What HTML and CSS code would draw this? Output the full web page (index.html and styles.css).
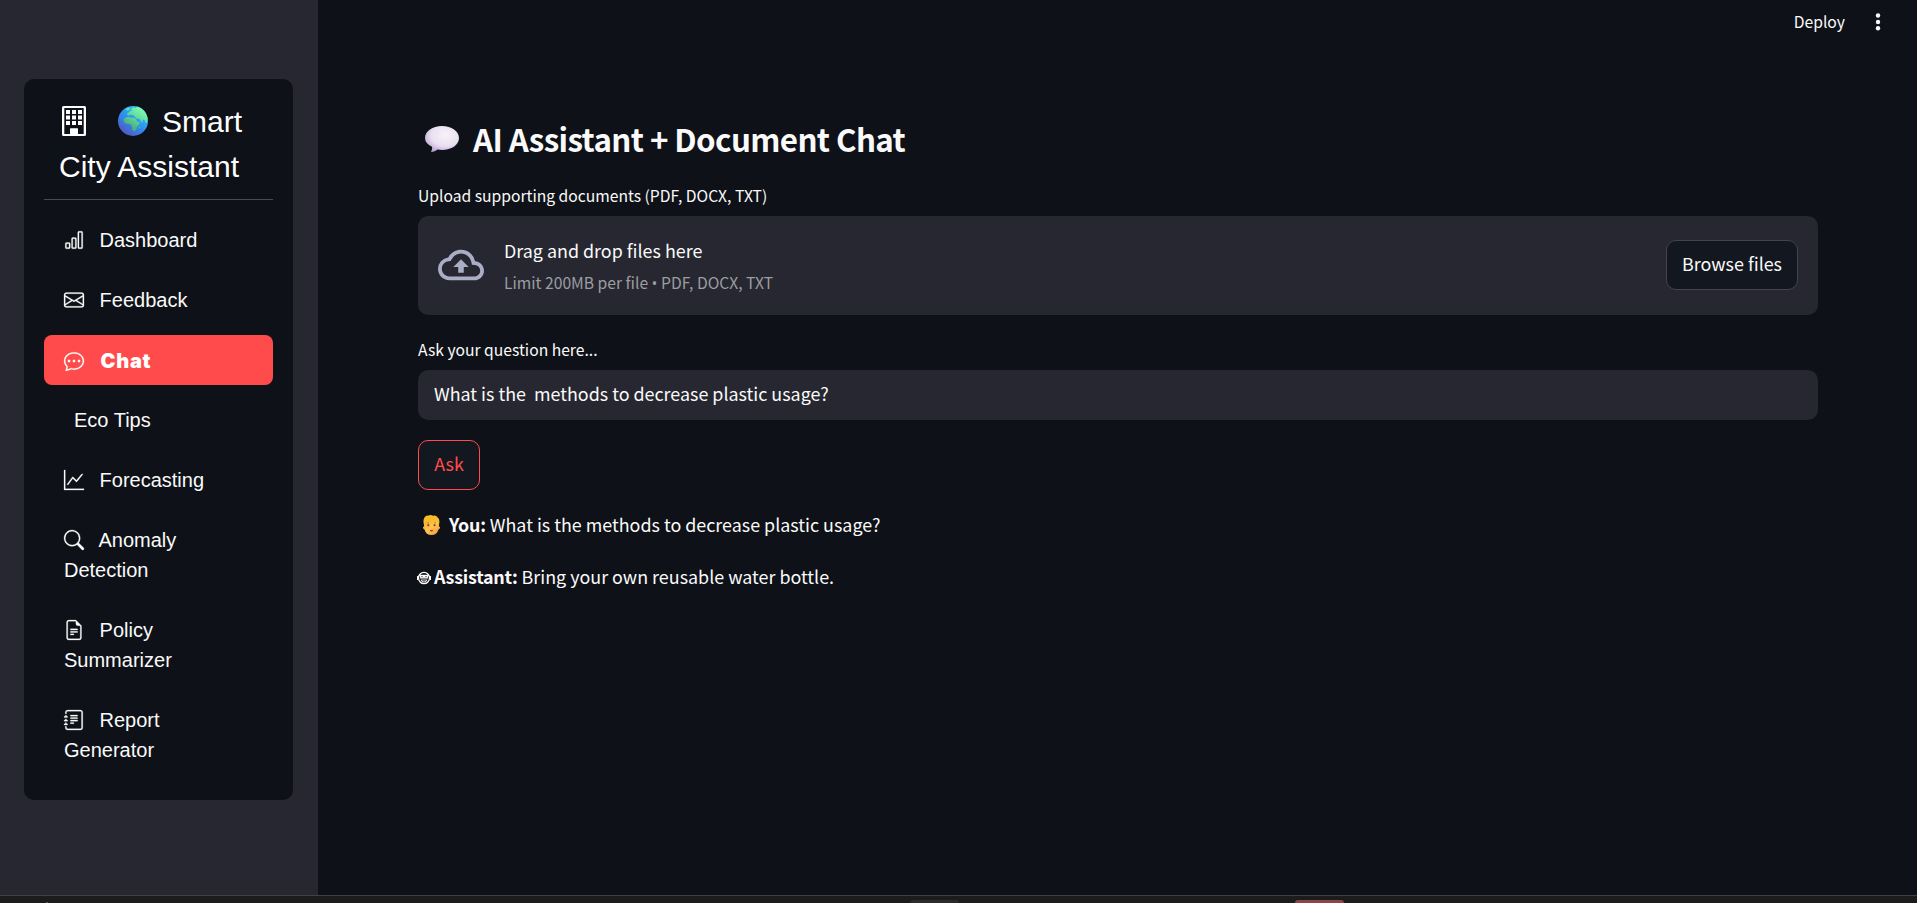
FILE: index.html
```html
<!DOCTYPE html>
<html lang="en">
<head>
<meta charset="utf-8">
<title>Smart City Assistant</title>
<link rel="stylesheet" href="styles.css">
</head>
<body>
<div class="app">
  <aside class="sidebar">
    <nav class="menu">
      <div class="menu-title"><svg class="title-building" viewBox="0 0 24 30"><path fill="#fff" fill-rule="evenodd" d="M1.500 0h21A1.500 1.500 0 0 1 24 1.500v27a1.500 1.500 0 0 1-1.500 1.500h-21A1.500 1.500 0 0 1 0 28.500v-27A1.500 1.500 0 0 1 1.500 0zM2.300 2v26H8v-4.500a1 1 0 0 1 1-1h6a1 1 0 0 1 1 1V28h5.700V2z"/><path fill="#fff" d="M8 22.500h8V29H8zM4 4h4v4H4zM10 4h4v4h-4zM16 4h4v4h-4zM4 9.500h4v4H4zM10 9.500h4v4h-4zM16 9.500h4v4h-4zM4 15h4v4H4zM10 15h4v4h-4zM16 15h4v4h-4z"/></svg><svg class="title-globe" viewBox="0 0 30 30"><defs><linearGradient id="sea" x1=".8" y1=".1" x2=".2" y2=".9"><stop offset="0" stop-color="#2fc4ff"/><stop offset=".5" stop-color="#2d91ee"/><stop offset="1" stop-color="#5059c4"/></linearGradient><linearGradient id="land" gradientUnits="userSpaceOnUse" x1="26" y1="3" x2="12" y2="25"><stop offset="0" stop-color="#7dffb4"/><stop offset=".5" stop-color="#5fd497"/><stop offset="1" stop-color="#44a077"/></linearGradient></defs><circle cx="15" cy="15" r="15" fill="url(#sea)"/><path fill="url(#land)" d="M13 3l2-1.500 3 .5 1-1.400q6 1.400 9 7l1.600 4.400-.6 5-1.500-.5-1-2.500-1.500-.5-1 3.500-1.500-2.500-1.500-2-2 .5-2-2-1-1.500-2-.5-1.500-.5-1.500 1-2-.5.500-2 2-1 1-1.500 2 .5z"/><path fill="url(#land)" d="M7.500 3.500l2.500-1.800 2 .3-1 2-2 .5zM5.500 13.500l2-2 3-.5 3.500.8 3 .2 1.500 2.500 1.500 1.500 2 .5-1 2-2 2-.5 2.500-1.500 2-1.500.5-1.300-2-.5-4-1.700-1.500-4-.3-2-1.900z"/><path fill="#53bb88" d="M21 20.500l1.200-1-.4 2.500-1 .3z"/></svg>Smart City Assistant</div>
      <ul class="menu-list">
        <li class="item"><svg class="icon" viewBox="0 0 16 16"><path d="M4 11H2v3h2v-3zm5-4H7v7h2V7zm5-5v12h-2V2h2zm-2-1a1 1 0 0 0-1 1v12a1 1 0 0 0 1 1h2a1 1 0 0 0 1-1V2a1 1 0 0 0-1-1h-2zM6 7a1 1 0 0 1 1-1h2a1 1 0 0 1 1 1v7a1 1 0 0 1-1 1H7a1 1 0 0 1-1-1V7zm-5 4a1 1 0 0 1 1-1h2a1 1 0 0 1 1 1v3a1 1 0 0 1-1 1H2a1 1 0 0 1-1-1v-3z"/></svg> Dashboard</li>
        <li class="item"><svg class="icon" viewBox="0 0 16 16"><path d="M0 4a2 2 0 0 1 2-2h12a2 2 0 0 1 2 2v8a2 2 0 0 1-2 2H2a2 2 0 0 1-2-2V4Zm2-1a1 1 0 0 0-1 1v.217l7 4.200 7-4.200V4a1 1 0 0 0-1-1H2Zm13 2.383-4.708 2.825L15 11.105V5.383Zm-.034 6.876-5.640-3.471L8 9.583l-1.326-.795-5.640 3.470A1 1 0 0 0 2 13h12a1 1 0 0 0 .966-.741ZM1 11.105l4.708-2.897L1 5.383v5.722Z"/></svg> Feedback</li>
        <li class="item active"><svg class="icon" viewBox="0 0 16 16"><path d="M5 8a1 1 0 1 1-2 0 1 1 0 0 1 2 0zm4 0a1 1 0 1 1-2 0 1 1 0 0 1 2 0zm3 1a1 1 0 1 0 0-2 1 1 0 0 0 0 2z"/><path d="m2.165 15.803.02-.004c1.830-.363 2.948-.842 3.468-1.105A9.060 9.060 0 0 0 8 15c4.418 0 8-3.134 8-7s-3.582-7-8-7-8 3.134-8 7c0 1.760.743 3.370 1.970 4.600a10.437 10.437 0 0 1-.524 2.318l-.003.011a10.722 10.722 0 0 1-.244.637c-.079.186.074.394.273.362a21.673 21.673 0 0 0 .693-.125zm.8-3.108a1 1 0 0 0-.287-.801C1.618 10.830 1 9.468 1 8c0-3.192 3.004-6 7-6s7 2.808 7 6c0 3.193-3.004 6-7 6a8.060 8.060 0 0 1-2.088-.272 1 1 0 0 0-.711.074c-.387.196-1.240.570-2.634.893a10.970 10.970 0 0 0 .398-2z"/></svg> <span class="active-text">Chat</span></li>
        <li class="item no-icon">Eco Tips</li>
        <li class="item"><svg class="icon" viewBox="0 0 16 16"><path d="M0 0h1v15h15v1H0V0Zm14.817 3.113a.5.5 0 0 1 .07.704l-4.500 5.500a.5.5 0 0 1-.740.037L7.060 6.767l-3.656 5.027a.5.5 0 0 1-.808-.588l4-5.500a.5.5 0 0 1 .758-.06l2.609 2.610 4.150-5.073a.5.5 0 0 1 .704-.07Z"/></svg> Forecasting</li>
        <li class="item"><svg class="icon" viewBox="0 0 16 16"><path d="M11.742 10.344a6.500 6.500 0 1 0-1.397 1.398h-.001c.03.04.062.078.098.115l3.850 3.850a1 1 0 0 0 1.415-1.414l-3.850-3.850a1.007 1.007 0 0 0-.115-.1zM12 6.500a5.500 5.500 0 1 1-11 0 5.500 5.500 0 0 1 11 0z"/></svg> Anomaly<br>Detection</li>
        <li class="item"><svg class="icon" viewBox="0 0 16 16"><path d="M5.500 7a.5.5 0 0 0 0 1h5a.5.5 0 0 0 0-1h-5zM5 9.500a.5.5 0 0 1 .5-.5h5a.5.5 0 0 1 0 1h-5a.5.5 0 0 1-.5-.5zm0 2a.5.5 0 0 1 .5-.5h2a.5.5 0 0 1 0 1h-2a.5.5 0 0 1-.5-.5z"/><path d="M9.500 0H4a2 2 0 0 0-2 2v12a2 2 0 0 0 2 2h8a2 2 0 0 0 2-2V4.500L9.500 0zm0 1v2A1.500 1.500 0 0 0 11 4.500h2V14a1 1 0 0 1-1 1H4a1 1 0 0 1-1-1V2a1 1 0 0 1 1-1h5.500z"/></svg> Policy<br>Summarizer</li>
        <li class="item"><svg class="icon" viewBox="0 0 16 16"><path d="M5 10.500a.5.5 0 0 1 .5-.5h2a.5.5 0 0 1 0 1h-2a.5.5 0 0 1-.5-.5zm0-2a.5.5 0 0 1 .5-.5h5a.5.5 0 0 1 0 1h-5a.5.5 0 0 1-.5-.5zm0-2a.5.5 0 0 1 .5-.5h5a.5.5 0 0 1 0 1h-5a.5.5 0 0 1-.5-.5zm0-2a.5.5 0 0 1 .5-.5h5a.5.5 0 0 1 0 1h-5a.5.5 0 0 1-.5-.5z"/><path d="M3 0h10a2 2 0 0 1 2 2v12a2 2 0 0 1-2 2H3a2 2 0 0 1-2-2v-1h1v1a1 1 0 0 0 1 1h10a1 1 0 0 0 1-1V2a1 1 0 0 0-1-1H3a1 1 0 0 0-1 1v1H1V2a2 2 0 0 1 2-2z"/><path d="M1 5v-.5a.5.5 0 0 1 1 0V5h.5a.5.5 0 0 1 0 1h-2a.5.5 0 0 1 0-1H1zm0 3v-.5a.5.5 0 0 1 1 0V8h.5a.5.5 0 0 1 0 1h-2a.5.5 0 0 1 0-1H1zm0 3v-.5a.5.5 0 0 1 1 0v.5h.5a.5.5 0 0 1 0 1h-2a.5.5 0 0 1 0-1H1z"/></svg> Report<br>Generator</li>
      </ul>
    </nav>
  </aside>
  <div class="page">
    <header class="toolbar">
      <span class="deploy">Deploy</span>
      <svg class="dots" viewBox="0 0 6 18"><circle cx="3" cy="2.500" r="2.200"/><circle cx="3" cy="9" r="2.200"/><circle cx="3" cy="15.300" r="2.200"/></svg>
    </header>
    <main class="content">
      <h2 class="heading"><svg class="bubble" viewBox="0 0 34 26"><defs><radialGradient id="bub" cx=".6" cy=".35" r=".7"><stop offset="0" stop-color="#f6f3f8"/><stop offset=".6" stop-color="#e9e0f1"/><stop offset="1" stop-color="#b9a3d3"/></radialGradient></defs><path fill="url(#bub)" d="M17 0c9.500 0 17 5 17 12s-7.500 12-17 12q-2.300 0-4.500-.4Q10 26 6.500 26q-.8-.3 0-1.300 1-1.700.5-4Q0 17.500 0 12C0 5 7.500 0 17 0z"/></svg><span>AI Assistant + Document Chat</span></h2>
      <label class="label upload-label">Upload supporting documents (PDF, DOCX, TXT)</label>
      <section class="dropzone">
        <svg class="cloud" viewBox="0 0 24 24"><path d="M19.350 10.040A7.490 7.490 0 0 0 12 4C9.110 4 6.600 5.640 5.350 8.040A5.994 5.994 0 0 0 0 14c0 3.310 2.690 6 6 6h13c2.760 0 5-2.240 5-5 0-2.640-2.050-4.780-4.650-4.960zM19 18H6c-2.210 0-4-1.790-4-4 0-2.050 1.530-3.760 3.560-3.970l1.070-.11.5-.95A5.469 5.469 0 0 1 12 6c2.620 0 4.880 1.860 5.390 4.430l.3 1.500 1.530.11A2.980 2.980 0 0 1 22 15c0 1.650-1.350 3-3 3zM8 13h2.550v3h2.900v-3H16l-4-4z"/></svg>
        <div class="drop-text">
          <span class="drop-main">Drag and drop files here</span>
          <small class="drop-limit">Limit 200MB per file <span class="bullet">•</span> PDF, DOCX, TXT</small>
        </div>
        <button class="button browse">Browse files</button>
      </section>
      <label class="label ask-label">Ask your question here...</label>
      <div class="field">What is the  methods to decrease plastic usage?</div>
      <button class="button ask">Ask</button>
      <p class="message you"><svg class="face" viewBox="0 0 17 20"><defs><linearGradient id="skin" x1="0" y1="0" x2="1" y2="1"><stop offset="0" stop-color="#f8a830"/><stop offset=".5" stop-color="#ffc64a"/><stop offset="1" stop-color="#f08e3c"/></linearGradient></defs><path fill="url(#skin)" d="M1 5h15v6.500q1.200 0 1 1.200-.3 1.500-1.500 1.800Q14 20 8.500 20T1.500 14.500Q.3 14.200 0 12.700q-.2-1.200 1-1.200z"/><path fill="#f6bd29" d="M1 10Q-.3 5 1.500 2.500 3 .2 5 .7q2.500-1.400 5 0 3-1 4.500 1.500 2 1 2 4.500l-.7 4-1-4Q12 7 10 5.500 7 7.500 3 6.500z"/><circle cx="5.300" cy="10.200" r="1" fill="#5a3644"/><circle cx="11.500" cy="10.200" r="1" fill="#5a3644"/><path d="M4 8.200l2-.5M11 7.700l2 .5" stroke="#ad6b22" stroke-width=".8"/><path d="M7 15.500q1.500 1 3 0z" stroke="#bb2949" fill="#bb2949"/></svg><b>You:</b> What is the methods to decrease plastic usage?</p>
      <p class="message assistant"><svg class="robot" viewBox="0 0 14 14"><ellipse cx="7" cy="7" rx="5.500" ry="5.700" fill="none" stroke="#fff" stroke-width="1.300"/><path d="M.6 5v4M13.400 5v4" stroke="#fff" stroke-width="1.200"/><path d="M3 3.800h8v3.700H3z" fill="#fff"/><path d="M4 6.300l1-1 1 1M8 6.300l1-1 1 1" fill="none" stroke="#15171d" stroke-width=".8"/><path d="M4 9h6q-.5 2-3 2T4 9z" fill="none" stroke="#fff" stroke-width=".9"/></svg><b>Assistant:</b> Bring your own reusable water bottle.</p>
    </main>
  </div>
</div>
<footer class="taskbar"><i class="speck"></i><i class="tab tab-gray"></i><i class="tab tab-red"></i></footer>
</body>
</html>
```

FILE: styles.css
```css
* { box-sizing: border-box; }
body {
  margin: 0;
  height: 903px;
  overflow: hidden;
  display: flex;
  flex-direction: column;
  background: #0e1117;
  color: #fafafa;
  font-family: "Noto Sans CJK SC", "Noto Sans", sans-serif;
  font-size: 17.900px;
}
.app { display: flex; height: 895px; }

/* Sidebar */
.sidebar { width: 318px; padding: 79px 25px 0 24px; background: #262730; }
.menu {
  height: 721px;
  padding: 20px;
  border-radius: 10px;
  background: #0e1117;
  font-family: "Liberation Sans", Arial, sans-serif;
  font-size: 20px;
  line-height: 30px;
}
.menu-title {
  height: 101px;
  padding: 0 16px 0 15px;
  border-bottom: 1px solid #4a4b4e;
  font-size: 30px;
  line-height: 45px;
  color: #fff;
}
.title-building { width: 24px; height: 30px; margin: 0 32px 0 3px; vertical-align: -4px; }
.title-globe { width: 30px; height: 30px; margin-right: 14px; vertical-align: -4px; }
.menu-list { list-style: none; margin: 15px 0 0; padding: 0; display: flex; flex-direction: column; gap: 10px; }
.item { padding: 10px 20px; border-radius: 8px; }
.item.active { height: 50px; padding-top: 11px; background: #ff4b4b; color: #fff; }
.active-text { margin-left: 1px; font-family: Inter, "Liberation Sans", sans-serif; font-weight: 900; font-size: 20px; line-height: 1; letter-spacing: .7px; }
.item.no-icon { padding-left: 30px; }
.icon { width: 20px; height: 20px; margin-right: 10px; vertical-align: -3px; fill: currentColor; stroke: currentColor; stroke-width: .2; overflow: visible; }

/* Toolbar */
.page { flex: 1; display: flex; flex-direction: column; }
.toolbar {
  height: 75px;
  padding: 7px 36px 0 0;
  display: flex;
  justify-content: flex-end;
  align-items: flex-start;
  font-size: 15.700px;
  line-height: 30px;
}
.dots { width: 6px; height: 18px; margin: 6px 0 0 30px; fill: #fafafa; }

/* Main column */
.content { width: 1400px; margin-left: 100px; display: flex; flex-direction: column; }
.heading {
  height: 84px;
  margin: 0;
  padding: 42px 0 0 7px;
  display: flex;
  font-size: 31.300px;
  line-height: 44px;
  letter-spacing: -.6px;
  white-space: nowrap;
}
.bubble { width: 34px; height: 26px; margin: 9px 14px 0 0; }
.label { font-size: 15.660px; line-height: 24px; }
.upload-label { height: 57px; padding-top: 25px; }
.dropzone {
  height: 99px;
  padding: 0 20px;
  display: flex;
  align-items: center;
  border-radius: 10px;
  background: #262730;
}
.cloud { width: 46px; height: 46px; margin: 0 20px 2px 0; fill: #a9aec4; }
.drop-text { flex: 1; display: flex; flex-direction: column; line-height: 32px; }
.drop-limit { padding-top: 1px; margin-bottom: -1px; font-size: 15.660px; color: #9c9da1; }
.bullet { font-family: "Open Sans", "Noto Sans", sans-serif; line-height: 1; }
.button {
  height: 50px;
  padding: 0 0 4px;
  border: 1px solid #41444c;
  border-radius: 10px;
  background: #131720;
  color: #fafafa;
  font: inherit;
  line-height: 43px;
}
.browse { width: 132px; margin-bottom: 1px; }
.ask-label { height: 55px; padding-top: 23px; }
.field {
  height: 50px;
  padding: 0 16px;
  border-radius: 10px;
  background: #262730;
  line-height: 46px;
  white-space: pre;
}
.ask { width: 62px; margin-top: 20px; border-color: #ff4b4b; color: #ff4b4b; }
.message { height: 32px; margin: 20px 0 0; line-height: 32px; white-space: nowrap; }
.message b { letter-spacing: -.25px; }
.you { margin-top: 18px; padding-left: 5px; }
.face { width: 17px; height: 20px; margin-right: 9px; vertical-align: -3px; }
.robot { width: 14px; height: 14px; margin: 0 3px 0 -1px; vertical-align: -1px; }

/* Strip along the bottom edge */
.taskbar { height: 8px; padding: 4px 0 0; display: flex; border-top: 1px solid #414143; background: #1c1c1c; }
.tab { width: 49px; height: 3px; flex: none; border-radius: 4px 4px 0 0; }
.speck { width: 2px; height: 1px; flex: none; margin: 2px 862px 0 46px; background: #555; }
.tab-gray { margin-right: 336px; background: #2b2b2d; }
.tab-red { background: #8a444a; }
```
